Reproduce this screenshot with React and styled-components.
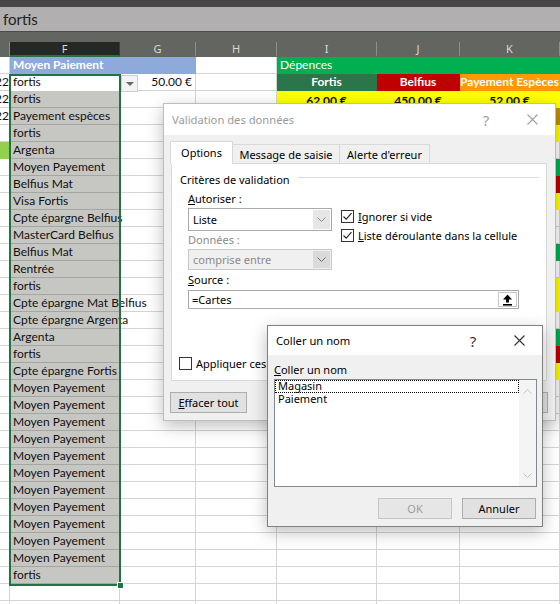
import styled, { createGlobalStyle } from "styled-components";

const GlobalStyle = createGlobalStyle`
  html, body { margin: 0; padding: 0; background: #fff; }
  * { box-sizing: border-box; }
`;

const COLS = "10px 110px 76px 81px 100px 83px 100px";
const BLUE = "#8eaadb";
const GREEN = "#00b050";
const DKGREEN = "#2b754a";
const RED = "#c00000";
const ORANGE = "#ff9900";
const YELLOW = "#ffff00";
const GOLD = "#bf8f00";
const LISTGRAY = "#c6c6c3";

const items = [
  "fortis", "Payement espèces", "fortis", "Argenta", "Moyen Payement", "Belfius Mat",
  "Visa Fortis", "Cpte épargne Belfius", "MasterCard Belfius", "Belfius Mat", "Rentrée",
  "fortis", "Cpte épargne Mat Belfius", "Cpte épargne Argenta", "Argenta", "fortis",
  "Cpte épargne Fortis", ...Array(11).fill("Moyen Payement"), "fortis",
];

const rowColors = {
  2: YELLOW, 3: GOLD, 4: YELLOW, 6: GREEN, 7: RED, 8: YELLOW, 11: GREEN,
  13: YELLOW, 14: YELLOW, 16: GREEN, 17: RED, 18: YELLOW,
};

const buildRows = () => {
  const rows = [];
  rows.push([
    {},
    { text: "Moyen Paiement", span: 2, bg: BLUE, color: "#fff", bold: true },
    {},
    { text: "Dépences", span: 3, bg: GREEN, color: "#fff" },
  ]);
  rows.push([
    { text: "22", align: "right", clip: true },
    { text: "fortis", bg: "#fff" },
    { text: "50.00 €", align: "right" },
    {},
    { text: "Fortis", bg: DKGREEN, color: "#fff", bold: true, align: "center" },
    { text: "Belfius", bg: RED, color: "#fff", bold: true, align: "center" },
    { text: "Payement Espèces", bg: ORANGE, color: "#fff", bold: true, align: "center" },
  ]);
  for (let r = 2; r < 33; r++) {
    const item = items[r - 2];
    const c = rowColors[r];
    const values = r === 2 ? ["62.00 €", "450.00 €", "52.00 €"] : ["", "", ""];
    rows.push([
      r <= 3 ? { text: "22", align: "right", clip: true } : r === 5 ? { bg: "#92d050" } : {},
      item !== undefined ? { text: item, bg: LISTGRAY, line: "#a4a6a2" } : {},
      {},
      {},
      ...values.map((v) => ({ text: v, bg: c, bold: true, align: "center", bottom: true })),
    ]);
  }
  return rows;
};

const Page = styled.div`
  position: relative;
  width: 560px;
  height: 604px;
  overflow: hidden;
  background: #fff;
  font-family: Lato, "Liberation Sans", sans-serif;
`;

const TopStrip = styled.div`
  height: 7px;
  background: #474747;
`;

const FormulaBar = styled.div`
  height: 25px;
  background: #b1afb0;
  border-bottom: 1px solid #4c4c4c;
  display: flex;
  align-items: center;
  padding-left: 3px;
  font-size: 15px;
  color: #222;
`;

const HeaderGap = styled.div`
  height: 10px;
  background: #636560;
`;

const HeaderRow = styled.div`
  display: grid;
  grid-template-columns: ${COLS};
  height: 15px;
  background: #636560;
`;

const HeadCell = styled.div`
  border-right: 1px solid ${(p) => (p.$selected ? "#3a3c39" : "#8e8f8c")};
  background: ${(p) => (p.$selected ? "#262826" : "transparent")};
  border-bottom: 2px solid ${(p) => (p.$selected ? "#217346" : "transparent")};
  color: #dadada;
  font-family: "Noto Sans", sans-serif;
  font-size: 11px;
  display: flex;
  align-items: center;
  justify-content: center;
  line-height: 13px;
`;

const Row = styled.div`
  display: grid;
  grid-template-columns: ${COLS};
`;

const Cell = styled.div`
  grid-column: span ${(p) => p.$span || 1};
  height: 17px;
  border-right: 1px solid ${(p) => p.$line || p.$bg || "#d4d4d4"};
  border-bottom: 1px solid ${(p) => p.$line || p.$bg || "#d4d4d4"};
  background: ${(p) => p.$bg || "transparent"};
  color: ${(p) => p.$color || "#111"};
  font-weight: ${(p) => (p.$bold ? 700 : 400)};
  font-size: 12px;
  display: flex;
  align-items: ${(p) => (p.$bottom ? "flex-end" : "center")};
  justify-content: ${(p) =>
    p.$align === "right" ? "flex-end" : p.$align === "center" ? "center" : "flex-start"};
  padding: 0 ${(p) => (p.$clip ? 0 : 3)}px 0 3px;
  white-space: nowrap;
  overflow: ${(p) => (p.$clip ? "hidden" : "visible")};
  line-height: ${(p) => (p.$bottom ? 13 : 16)}px;
`;

const Selection = styled.div`
  position: absolute;
  left: 9px;
  top: 74px;
  width: 112px;
  height: 512px;
  border: 2px solid #217346;
`;

const Handle = styled.div`
  position: absolute;
  right: -5px;
  bottom: -5px;
  width: 7px;
  height: 7px;
  background: #217346;
  border: 1px solid #fff;
`;

const DropArrow = styled.div`
  position: absolute;
  left: 121px;
  top: 75px;
  width: 17px;
  height: 17px;
  background: #f3f3f3;
  border: 1px solid #d0d0d0;
  display: flex;
  align-items: center;
  justify-content: center;
  &::after {
    content: "";
    border-left: 4px solid transparent;
    border-right: 4px solid transparent;
    border-top: 4px solid #666;
  }
`;

/* ---------- dialogs ---------- */

const Dialog = styled.div`
  position: absolute;
  left: ${(p) => p.$left}px;
  top: ${(p) => p.$top}px;
  width: ${(p) => p.$w}px;
  height: ${(p) => p.$h}px;
  background: #f0f0f0;
  border: 1px solid ${(p) => p.$border};
  box-shadow: 0 5px 16px rgba(0, 0, 0, 0.26);
  display: flex;
  flex-direction: column;
  font-family: "Noto Sans", sans-serif;
  font-size: 11px;
  color: #000;
  overflow: hidden;
`;

const TitleBar = styled.div`
  height: ${(p) => p.$h}px;
  flex: none;
  background: #fff;
  display: flex;
  align-items: center;
  padding-left: 8px;
  color: ${(p) => (p.$inactive ? "#9a9a9a" : "#000")};
  font-size: 11.2px;
`;

const TitleText = styled.div`
  flex: 1;
`;

const TitleIcon = styled.div`
  width: 46px;
  height: 100%;
  display: flex;
  align-items: center;
  justify-content: center;
  font-size: 15px;
  color: ${(p) => (p.$inactive ? "#a0a0a0" : "#333")};
`;

const CloseIcon = ({ color }) => (
  <svg width="11" height="11" viewBox="0 0 11 11">
    <path d="M0.5 0.5 L10.5 10.5 M10.5 0.5 L0.5 10.5" stroke={color} strokeWidth="1.1" fill="none" />
  </svg>
);

const DialogBody = styled.div`
  flex: 1;
  display: flex;
  flex-direction: column;
  padding: ${(p) => p.$pad};
`;

const TabRow = styled.div`
  display: flex;
  align-items: flex-end;
  height: 22px;
  margin-left: -1px;
`;

const Tab = styled.div`
  position: relative;
  z-index: ${(p) => (p.$active ? 1 : 0)};
  width: ${(p) => p.$w}px;
  height: ${(p) => (p.$active ? 23 : 19)}px;
  margin-bottom: ${(p) => (p.$active ? -1 : 0)}px;
  margin-right: -1px;
  border: 1px solid #d9d9d9;
  border-bottom: none;
  background: ${(p) => (p.$active ? "#fff" : "#f0f0f0")};
  display: flex;
  align-items: center;
  justify-content: center;
  padding-bottom: ${(p) => (p.$active ? 2 : 0)}px;
`;

const Panel = styled.div`
  height: 218px;
  background: #fff;
  border: 1px solid #d9d9d9;
  padding: 7px;
  display: flex;
  flex-direction: column;
  overflow: hidden;
`;

const GroupHead = styled.div`
  display: flex;
  align-items: center;
  height: 16px;
  margin-left: 1px;
  gap: 8px;
  &::after {
    content: "";
    flex: 1;
    height: 1px;
    background: #dcdcdc;
    margin-top: -3px;
  }
`;

const Criteria = styled.div`
  display: flex;
  padding-left: 9px;
  margin-top: 4px;
  gap: 9px;
`;

const FieldCol = styled.div`
  width: 144px;
  display: flex;
  flex-direction: column;
`;

const Label = styled.div`
  height: 16px;
  line-height: 16px;
  margin-top: ${(p) => p.$mt || 0}px;
  color: ${(p) => (p.$disabled ? "#8a8a8a" : "#000")};
`;

const Select = styled.div`
  height: ${(p) => p.$h}px;
  margin-top: 1px;
  border: 1px solid ${(p) => (p.$disabled ? "#c8c8c8" : "#a9a9a9")};
  background: ${(p) => (p.$disabled ? "#f0f0f0" : "#fff")};
  color: ${(p) => (p.$disabled ? "#8a8a8a" : "#000")};
  display: flex;
  align-items: center;
  padding-left: 4px;
`;

const SelectValue = styled.div`
  flex: 1;
`;

const SelectArrow = styled.div`
  width: 17px;
  align-self: stretch;
  margin: 1px;
  background: ${(p) => (p.$disabled ? "#dadada" : "#e6e6e6")};
  display: flex;
  align-items: center;
  justify-content: center;
`;

const ChevronDown = ({ color = "#606060" }) => (
  <svg width="9" height="5" viewBox="0 0 9 5">
    <path d="M0.5 0.5 L4.5 4.5 L8.5 0.5" stroke={color} strokeWidth="1" fill="none" />
  </svg>
);

const ChevronUp = ({ color = "#606060" }) => (
  <svg width="9" height="5" viewBox="0 0 9 5">
    <path d="M0.5 4.5 L4.5 0.5 L8.5 4.5" stroke={color} strokeWidth="1" fill="none" />
  </svg>
);

const CheckCol = styled.div`
  display: flex;
  flex-direction: column;
  gap: 2px;
  padding-top: 17px;
`;

const CheckRow = styled.div`
  display: flex;
  align-items: center;
  gap: 4px;
  height: 17px;
  white-space: nowrap;
  margin-top: ${(p) => (p.$auto ? "auto" : 0)};
  margin-bottom: ${(p) => (p.$auto ? 1 : 0)}px;
`;

const Box = styled.div`
  flex: none;
  width: 13px;
  height: 13px;
  border: 1px solid #333;
  background: #fff;
  display: flex;
  align-items: center;
  justify-content: center;
`;

const CheckBox = ({ checked }) => (
  <Box>
    {checked && (
      <svg width="11" height="11" viewBox="0 0 11 11">
        <path d="M1.5 5.5 L4.2 8.2 L9.5 2.2" stroke="#222" strokeWidth="1.1" fill="none" />
      </svg>
    )}
  </Box>
);

const SourceWrap = styled.div`
  padding-left: 9px;
`;

const Input = styled.div`
  width: 331px;
  height: 19px;
  margin-top: 2px;
  border: 1px solid #a9a9a9;
  background: #fff;
  display: flex;
  align-items: center;
  padding-left: 3px;
`;

const RefButton = styled.div`
  width: 19px;
  height: 15px;
  margin-right: 1px;
  border: 1px solid #c8c8c8;
  background: #fff;
  display: flex;
  align-items: center;
  justify-content: center;
`;

const UploadIcon = () => (
  <svg width="11" height="12" viewBox="0 0 11 12">
    <path d="M5.5 0.5 L10 5.5 L7 5.5 L7 8.5 L4 8.5 L4 5.5 L1 5.5 Z" fill="#000" />
    <rect x="1" y="10" width="9" height="1.6" fill="#000" />
  </svg>
);

const ButtonRow = styled.div`
  display: flex;
  align-items: center;
  gap: ${(p) => p.$gap || 8}px;
  margin-top: 11px;
  margin-left: ${(p) => p.$ml || 0}px;
  margin-right: ${(p) => p.$mr || 0}px;
  justify-content: ${(p) => p.$justify || "flex-start"};
`;

const Button = styled.div`
  width: ${(p) => p.$w || 74}px;
  height: 21px;
  border: 1px solid ${(p) => (p.$disabled ? "#c6c6c6" : "#adadad")};
  background: ${(p) => (p.$disabled ? "#e6e6e6" : "#e1e1e1")};
  color: ${(p) => (p.$disabled ? "#9d9d9d" : "#000")};
  display: flex;
  align-items: center;
  justify-content: center;
  margin-left: ${(p) => (p.$push ? "auto" : 0)};
`;

const ListLabel = styled.div`
  height: 16px;
  line-height: 16px;
  margin-top: 7px;
`;

const ListBox = styled.div`
  width: 263px;
  height: 108px;
  margin-top: 1px;
  border: 1px solid #828790;
  background: #fff;
  display: flex;
`;

const ListItems = styled.div`
  flex: 1;
`;

const ListItem = styled.div`
  height: 13px;
  line-height: 12px;
  padding-left: 3px;
  outline: ${(p) => (p.$focused ? "1px dotted #000" : "none")};
  outline-offset: -1px;
`;

const ScrollBar = styled.div`
  width: 17px;
  background: #f4f4f4;
  display: flex;
  flex-direction: column;
  align-items: center;
  justify-content: space-between;
  padding: 9px 0 8px;
`;

const Validation = () => (
  <Dialog $left={163} $top={103} $w={393} $h={318} $border="#bdbdbd">
    <TitleBar $h={31} $inactive>
      <TitleText>Validation des données</TitleText>
      <TitleIcon $inactive>?</TitleIcon>
      <TitleIcon>
        <CloseIcon color="#a0a0a0" />
      </TitleIcon>
    </TitleBar>
    <DialogBody $pad="6px 8px 0 7px">
      <TabRow>
        <Tab $active $w={63}>Options</Tab>
        <Tab $w={108}>Message de saisie</Tab>
        <Tab $w={91}>Alerte d'erreur</Tab>
      </TabRow>
      <Panel>
        <GroupHead>Critères de validation</GroupHead>
        <Criteria>
          <FieldCol>
            <Label>
              <u>A</u>utoriser :
            </Label>
            <Select $h={23}>
              <SelectValue>Liste</SelectValue>
              <SelectArrow>
                <ChevronDown color="#8a8a8a" />
              </SelectArrow>
            </Select>
            <Label $mt={1} $disabled>
              Données :
            </Label>
            <Select $h={21} $disabled>
              <SelectValue>comprise entre</SelectValue>
              <SelectArrow $disabled>
                <ChevronDown color="#6a6a6a" />
              </SelectArrow>
            </Select>
          </FieldCol>
          <CheckCol>
            <CheckRow>
              <CheckBox checked />
              <span>
                <u>I</u>gnorer si vide
              </span>
            </CheckRow>
            <CheckRow>
              <CheckBox checked />
              <span>
                <u>L</u>iste déroulante dans la cellule
              </span>
            </CheckRow>
          </CheckCol>
        </Criteria>
        <SourceWrap>
          <Label $mt={2}>
            <u>S</u>ource :
          </Label>
          <Input>
            <SelectValue>=Cartes</SelectValue>
            <RefButton>
              <UploadIcon />
            </RefButton>
          </Input>
        </SourceWrap>
        <CheckRow $auto>
          <CheckBox />
          <span>Appliquer ces modifications aux cellules de paramètres identiques</span>
        </CheckRow>
      </Panel>
      <ButtonRow $ml={-1} $mr={-1}>
        <Button $w={77}>
          <span>
            <u>E</u>ffacer tout
          </span>
        </Button>
        <Button $push>OK</Button>
        <Button>Annuler</Button>
      </ButtonRow>
    </DialogBody>
  </Dialog>
);

const PasteName = () => (
  <Dialog $left={267} $top={325} $w={276} $h={202} $border="#808080">
    <TitleBar $h={29}>
      <TitleText>Coller un nom</TitleText>
      <TitleIcon>?</TitleIcon>
      <TitleIcon>
        <CloseIcon color="#333" />
      </TitleIcon>
    </TitleBar>
    <DialogBody $pad="0 5px 0 6px">
      <ListLabel>
        <u>C</u>oller un nom
      </ListLabel>
      <ListBox>
        <ListItems>
          <ListItem $focused>Magasin</ListItem>
          <ListItem>Paiement</ListItem>
        </ListItems>
        <ScrollBar>
          <ChevronUp color="#c2c2c2" />
          <ChevronDown color="#c2c2c2" />
        </ScrollBar>
      </ListBox>
      <ButtonRow $gap={10} $justify="flex-end" $mr={1}>
        <Button $disabled>OK</Button>
        <Button>Annuler</Button>
      </ButtonRow>
    </DialogBody>
  </Dialog>
);

const headers = ["", "F", "G", "H", "I", "J", "K"];

export default function App() {
  const rows = buildRows();
  return (
    <Page>
      <GlobalStyle />
      <TopStrip />
      <FormulaBar>fortis</FormulaBar>
      <HeaderGap />
      <HeaderRow>
        {headers.map((h, i) => (
          <HeadCell key={i} $selected={h === "F"}>
            {h}
          </HeadCell>
        ))}
      </HeaderRow>
      {rows.map((cells, r) => (
        <Row key={r}>
          {cells.map((c, i) => (
            <Cell
              key={i}
              $span={c.span}
              $bg={c.bg}
              $color={c.color}
              $bold={c.bold}
              $align={c.align}
              $clip={c.clip}
              $line={c.line}
              $bottom={c.bottom}
            >
              {c.text}
            </Cell>
          ))}
        </Row>
      ))}
      <Selection>
        <Handle />
      </Selection>
      <DropArrow />
      <Validation />
      <PasteName />
    </Page>
  );
}
